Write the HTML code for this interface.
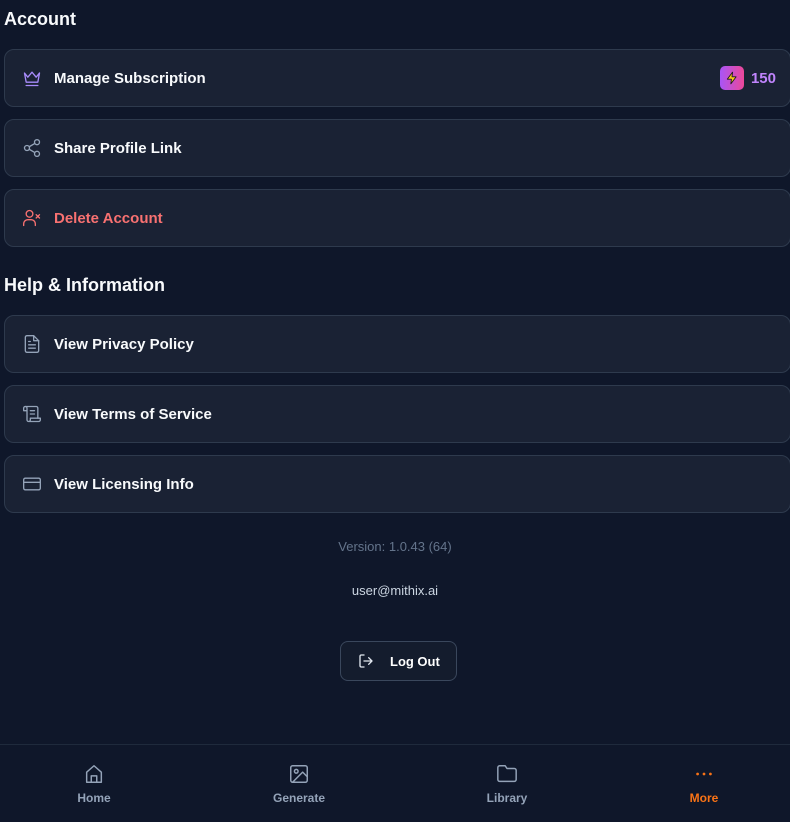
<!DOCTYPE html>
<html><head><meta charset="utf-8"><style>
*{box-sizing:border-box;margin:0;padding:0}
body{width:790px;height:822px;background:#0f172a;font-family:"Liberation Sans",sans-serif;color:#fff;position:relative;overflow:hidden}
h2{position:absolute;left:4px;font-size:18px;font-weight:bold;color:#f8fafc}
.card{position:absolute;left:4px;width:787px;height:58px;background:#1a2234;border:1px solid #2e3a4d;border-radius:10px;display:flex;align-items:center;padding-left:17px}
.card svg{width:20px;height:20px;fill:none;stroke:#94a3b8;stroke-width:1.6;stroke-linecap:round;stroke-linejoin:round;margin-right:12px}
.card span{font-size:15px;font-weight:bold;color:#f8fafc}
.badge{position:absolute;right:14px;top:16px;display:flex;align-items:center}
.bi{width:24px;height:24px;border-radius:5px;background:linear-gradient(90deg,#a855f7,#ec4899);display:flex;align-items:center;justify-content:center;margin-right:7px}
.nav{position:absolute;left:0;top:744px;width:790px;height:78px;border-top:1px solid #1f2a3c;background:#0f172a}
.ni{position:absolute;top:18px;width:100px;text-align:center;font-size:12px;font-weight:bold;color:#94a3b8}
.ni svg{width:22px;height:22px;fill:none;stroke:#94a3b8;stroke-width:1.6;stroke-linecap:round;stroke-linejoin:round;display:block;margin:0 auto 6px}
</style></head><body>
<h2 style="top:9px">Account</h2>
<div class="card" style="top:49px"><svg viewBox="0 0 24 24" style="stroke:#a78bfa"><path d="M3 6l4 5 5-6 5 6 4-5-2 11H5z"/><path d="M5 21h14"/></svg><span>Manage Subscription</span>
<div class="badge"><div class="bi"><svg viewBox="0 0 24 24" style="width:14px;height:14px;margin:0;fill:#facc15;stroke:#1a1a1a;stroke-width:1.5"><path d="M13 2L4 14h7l-1 8 9-12h-7z"/></svg></div><span style="color:#c084fc;font-size:15px">150</span></div></div>
<div class="card" style="top:119px"><svg viewBox="0 0 24 24"><circle cx="18" cy="5" r="3"/><circle cx="6" cy="12" r="3"/><circle cx="18" cy="19" r="3"/><path d="M8.6 13.5l6.8 4M15.4 6.5l-6.8 4"/></svg><span>Share Profile Link</span></div>
<div class="card" style="top:189px"><svg viewBox="0 0 24 24" style="stroke:#f87171"><circle cx="9" cy="7" r="4"/><path d="M2 21v-2a5 5 0 015-5h4a5 5 0 015 5v2"/><path d="M17 8l4 4M21 8l-4 4"/></svg><span style="color:#f87171">Delete Account</span></div>
<h2 style="top:275px">Help &amp; Information</h2>
<div class="card" style="top:315px"><svg viewBox="0 0 24 24"><path d="M14 2H6a2 2 0 00-2 2v16a2 2 0 002 2h12a2 2 0 002-2V8z"/><path d="M14 2v6h6M8 13h8M8 17h8M8 9h2"/></svg><span>View Privacy Policy</span></div>
<div class="card" style="top:385px"><svg viewBox="0 0 24 24"><path d="M8 21h12a2 2 0 002-2v-2H10v2a2 2 0 11-4 0V5a2 2 0 10-4 0v3h4"/><path d="M19 17V5a2 2 0 00-2-2H4M15 8h-5M15 12h-5"/></svg><span>View Terms of Service</span></div>
<div class="card" style="top:455px"><svg viewBox="0 0 24 24"><rect x="2" y="5" width="20" height="14" rx="2"/><path d="M2 10h20"/></svg><span>View Licensing Info</span></div>
<div style="position:absolute;top:539px;width:790px;text-align:center;font-size:13px;color:#64748b">Version: 1.0.43 (64)</div>
<div style="position:absolute;top:583px;width:790px;text-align:center;font-size:13px;color:#cbd5e1">user@mithix.ai</div>
<div style="position:absolute;left:340px;top:641px;width:117px;height:40px;border:1px solid #3a475c;border-radius:8px;background:#141c2d;display:flex;align-items:center;padding-left:17px">
<svg viewBox="0 0 24 24" style="width:16px;height:16px;fill:none;stroke:#e2e8f0;stroke-width:2;stroke-linecap:round;stroke-linejoin:round;margin-right:16px"><path d="M9 21H5a2 2 0 01-2-2V5a2 2 0 012-2h4M16 17l5-5-5-5M21 12H9"/></svg><span style="font-size:13px;font-weight:bold">Log Out</span></div>
<div class="nav">
<div class="ni" style="left:44px"><svg viewBox="0 0 24 24"><path d="M4 21V10l8-7 8 7v11z"/><path d="M9 21v-7h6v7"/></svg>Home</div>
<div class="ni" style="left:249px"><svg viewBox="0 0 24 24"><rect x="3" y="3" width="18" height="18" rx="2"/><circle cx="9" cy="9" r="2"/><path d="M21 15l-5-5L5 21"/></svg>Generate</div>
<div class="ni" style="left:457px"><svg viewBox="0 0 24 24"><path d="M20 20a2 2 0 002-2V8a2 2 0 00-2-2h-8l-2-3H4a2 2 0 00-2 2v13a2 2 0 002 2z"/></svg>Library</div>
<div class="ni" style="left:654px;color:#f97316"><svg viewBox="0 0 24 24" style="stroke:#f97316;stroke-width:3"><path d="M5 12h.01M12 12h.01M19 12h.01"/></svg>More</div>
</div>
</body></html>
